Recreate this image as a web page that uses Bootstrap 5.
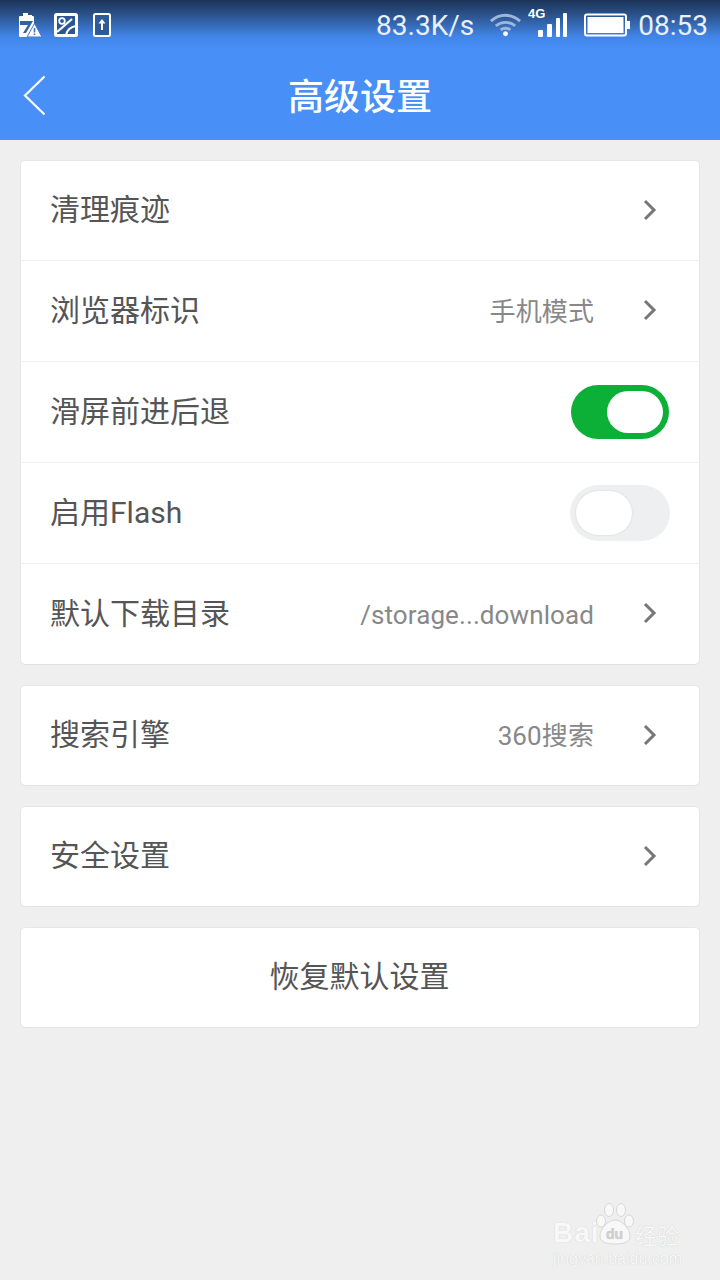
<!DOCTYPE html>
<html lang="zh">

<head>
  <meta charset="UTF-8">
  <title>高级设置</title>
  <meta name="viewport" content="width=device-width, initial-scale=1">
  <link href="https://cdn.jsdelivr.net/npm/bootstrap@5.3.0/dist/css/bootstrap.min.css" rel="stylesheet">
  <style>
    body {
      width: 720px;
      height: 1280px;
      overflow: hidden;
      background: #efefef;
      font-family: Roboto, "Noto Sans CJK SC", sans-serif;
      position: relative;
    }
    .status-strip {
      height: 50px;
      padding: 0 12px 0 18px;
      background: linear-gradient(#1b3357 0, #2c558f 16px, #4184e6 36px, #488ff8 50px);
      color: #e8f0fb;
    }
    .status-text { font-size: 28px; line-height: 50px; padding-top: 2px; }
    .title-bar { height: 90px; background: #488ff8; position: relative; }
    .title-bar h1 { font-size: 36px; font-weight: 500; color: #fff; margin: 0; padding-top: 3px; line-height: 90px; width: 100%; text-align: center; }
    .back-btn { position: absolute; left: 23px; top: 25px; }
    .settings-wrap { padding: 20px 20px 0; }
    .group-box {
      --bs-list-group-border-color: #e6e6e6;
      --bs-list-group-border-radius: 5px;
      margin-bottom: 20px;
      border-bottom: 1px solid #e2e2e2;
      border-radius: 5px;
    }
    .group-box .list-group-item {
      height: 101px;
      padding: 0 30px 2px 29px;
      color: #555;
      font-size: 30px;
      display: flex;
      align-items: center;
    }
    .group-box .list-group-item + .list-group-item { border-top-width: 0; }
    .group-box .list-group-item:not(:last-child) { border-bottom-color: #f0f0f0; }
    .group-box .list-group-item:last-child { height: 100px; border-bottom-width: 0; }
    .item-value { color: #888; font-size: 26px; letter-spacing: .1px; margin-left: auto; margin-right: 75px; padding-top: 4px; }
    .item-arrow { position: absolute; right: 42px; top: 38px; }
    .switch-on, .switch-off { width: 98px; height: 54px; border-radius: 27px; margin-left: auto; margin-top: 2px; position: relative; }
    .switch-on { background: #0cb037; }
    .switch-on::after { content: ""; position: absolute; right: 6px; top: 6px; width: 56px; height: 42px; border-radius: 21px; background: #fff; }
    .switch-off { width: 100px; height: 56px; border-radius: 28px; background: #edeff1; margin-right: -1px; }
    .switch-off::after { content: ""; position: absolute; left: 6px; top: 6px; width: 56px; height: 44px; border-radius: 22px; background: #fff; box-shadow: 0 0 2px #d0d0d0; }
    .baidu-mark { position: absolute; left: 553px; top: 1203px; width: 130px; height: 66px; color: #f8f8f8; text-shadow: 0 0 1px #c4c4c4; }
    .baidu-word { position: absolute; left: 0; top: 14px; font-size: 28px; font-weight: 700; line-height: 32px; letter-spacing: 1px; font-family: "Liberation Sans", sans-serif; }
    .baidu-jy { position: absolute; left: 82px; top: 17px; font-size: 22px; line-height: 28px; font-family: "Noto Sans CJK SC", sans-serif; }
    .baidu-url { position: absolute; left: 0; top: 46px; font-size: 16px; line-height: 20px; font-family: "Liberation Sans", sans-serif; }
    .baidu-paw { position: absolute; left: 42px; top: 0; }
  </style>
</head>

<body>
  <div class="status-strip d-flex align-items-center">
    <svg width="24" height="24" viewBox="0 0 24 24" fill="#fff" style="margin-right:12px">
      <path d="M5 0h5v2h4v1h1a1 1 0 0 1 1 1v8l-5 9v3H2a1 1 0 0 1-1-1V4a1 1 0 0 1 1-1h3z"/>
      <path d="M2 8h13l-7 12H5l5-8H2z" fill="#35639f"/>
      <path d="M16.500 10.500 24 24H9z" stroke="#3f75c4" stroke-width="1"/>
      <path d="M15.700 15h1.600v4.500h-1.600zm0 5.500h1.600v1.500h-1.600z" fill="#3f75c4"/>
    </svg>
    <svg width="24" height="24" viewBox="0 0 24 24" style="margin-right:15px">
      <rect x="1.500" y="1.500" width="21" height="21" rx="1" fill="#2d5592" stroke="#fff" stroke-width="3"/>
      <circle cx="8" cy="8" r="2.800" fill="none" stroke="#fff" stroke-width="1.800"/>
      <path d="M3 19 18 6M12 22c1-5 4-8 10-9" fill="none" stroke="#fff" stroke-width="2.200"/>
    </svg>
    <svg width="18" height="24" viewBox="0 0 18 24">
      <rect x="1" y="1" width="16" height="22" rx="1.500" fill="#2f5a98" stroke="#fff" stroke-width="2"/>
      <path d="M9 6 5.500 10.500H8V17h2v-6.500h2.500z" fill="#fff"/>
    </svg>
    <span class="status-text ms-auto" style="margin-right:15px">83.3K/s</span>
    <svg width="33" height="26" viewBox="0 0 34 26" style="margin-right:6px" fill="none" stroke="#9db6da" stroke-width="3">
      <path d="M2 9c9-8 21-8 30 0M7 14c6-5 14-5 20 0M12 18c3-2 7-2 10 0"/>
      <circle cx="17" cy="22" r="2.500" fill="#fff" stroke="none"/>
    </svg>
    <svg width="40" height="30" viewBox="0 0 40 30" style="margin-top:-6px;margin-right:16px" fill="#fff">
      <text x="0" y="11" font-size="13" font-weight="700" font-family="Liberation Sans, sans-serif">4G</text>
      <rect x="10" y="23" width="5" height="7" rx="1"/>
      <rect x="19" y="17" width="5" height="13" rx="1"/>
      <rect x="28" y="11" width="4" height="19" rx="1"/>
      <rect x="35" y="6" width="4" height="24" rx="1"/>
    </svg>
    <svg width="46" height="24" viewBox="0 0 46 24" style="margin-right:8px">
      <rect x="1" y="1.500" width="41" height="21" rx="2" fill="none" stroke="#fff" stroke-width="2"/>
      <rect x="3.500" y="4" width="36" height="16" fill="#fff"/>
      <rect x="43" y="8" width="3" height="8" fill="#fff"/>
    </svg>
    <span class="status-text">08:53</span>
  </div>

  <div class="title-bar">
    <h1>高级设置</h1>
    <svg class="back-btn" width="24" height="42" viewBox="0 0 24 42" fill="none" stroke="#fff" stroke-width="2.200">
      <path d="M21.500 1.500 2 20.500 21.500 39.500"/>
    </svg>
  </div>

  <div class="settings-wrap">
    <div class="list-group group-box">
      <div class="list-group-item">清理痕迹
        <svg class="item-arrow" width="14" height="22" viewBox="0 0 14 22" fill="none" stroke="#777" stroke-width="3"><path d="M2 2l9 9-9 9"/></svg>
      </div>
      <div class="list-group-item">浏览器标识
        <span class="item-value">手机模式</span>
        <svg class="item-arrow" width="14" height="22" viewBox="0 0 14 22" fill="none" stroke="#777" stroke-width="3"><path d="M2 2l9 9-9 9"/></svg>
      </div>
      <div class="list-group-item">滑屏前进后退
        <div class="switch-on"></div>
      </div>
      <div class="list-group-item">启用Flash
        <div class="switch-off"></div>
      </div>
      <div class="list-group-item">默认下载目录
        <span class="item-value">/storage...download</span>
        <svg class="item-arrow" width="14" height="22" viewBox="0 0 14 22" fill="none" stroke="#777" stroke-width="3"><path d="M2 2l9 9-9 9"/></svg>
      </div>
    </div>

    <div class="list-group group-box">
      <div class="list-group-item">搜索引擎
        <span class="item-value">360搜索</span>
        <svg class="item-arrow" width="14" height="22" viewBox="0 0 14 22" fill="none" stroke="#777" stroke-width="3"><path d="M2 2l9 9-9 9"/></svg>
      </div>
    </div>

    <div class="list-group group-box">
      <div class="list-group-item">安全设置
        <svg class="item-arrow" width="14" height="22" viewBox="0 0 14 22" fill="none" stroke="#777" stroke-width="3"><path d="M2 2l9 9-9 9"/></svg>
      </div>
    </div>

    <div class="list-group group-box">
      <div class="list-group-item justify-content-center">恢复默认设置</div>
    </div>
  </div>

  <div class="baidu-mark">
    <span class="baidu-word">Bai</span>
    <svg class="baidu-paw" width="40" height="44" viewBox="0 0 40 44" fill="#f8f8f8" stroke="#cfcfcf" stroke-width=".8">
      <ellipse cx="6" cy="18" rx="4.500" ry="6"/>
      <ellipse cx="14" cy="7" rx="4.500" ry="6.500"/>
      <ellipse cx="26" cy="7" rx="4.500" ry="6.500"/>
      <ellipse cx="34" cy="18" rx="4.500" ry="6"/>
      <path d="M20 17c7 0 15 9 15 16 0 6-6 8-15 8S5 39 5 33c0-7 8-16 15-16z"/>
      <text x="11" y="36" font-size="14" font-weight="700" fill="#d0d0d0" stroke="none" font-family="Liberation Sans, sans-serif">du</text>
    </svg>
    <span class="baidu-jy">经验</span>
    <span class="baidu-url">jingyan.baidu.com</span>
  </div>

  <script src="https://cdn.jsdelivr.net/npm/bootstrap@5.3.0/dist/js/bootstrap.bundle.min.js"></script>
</body>
</html>
